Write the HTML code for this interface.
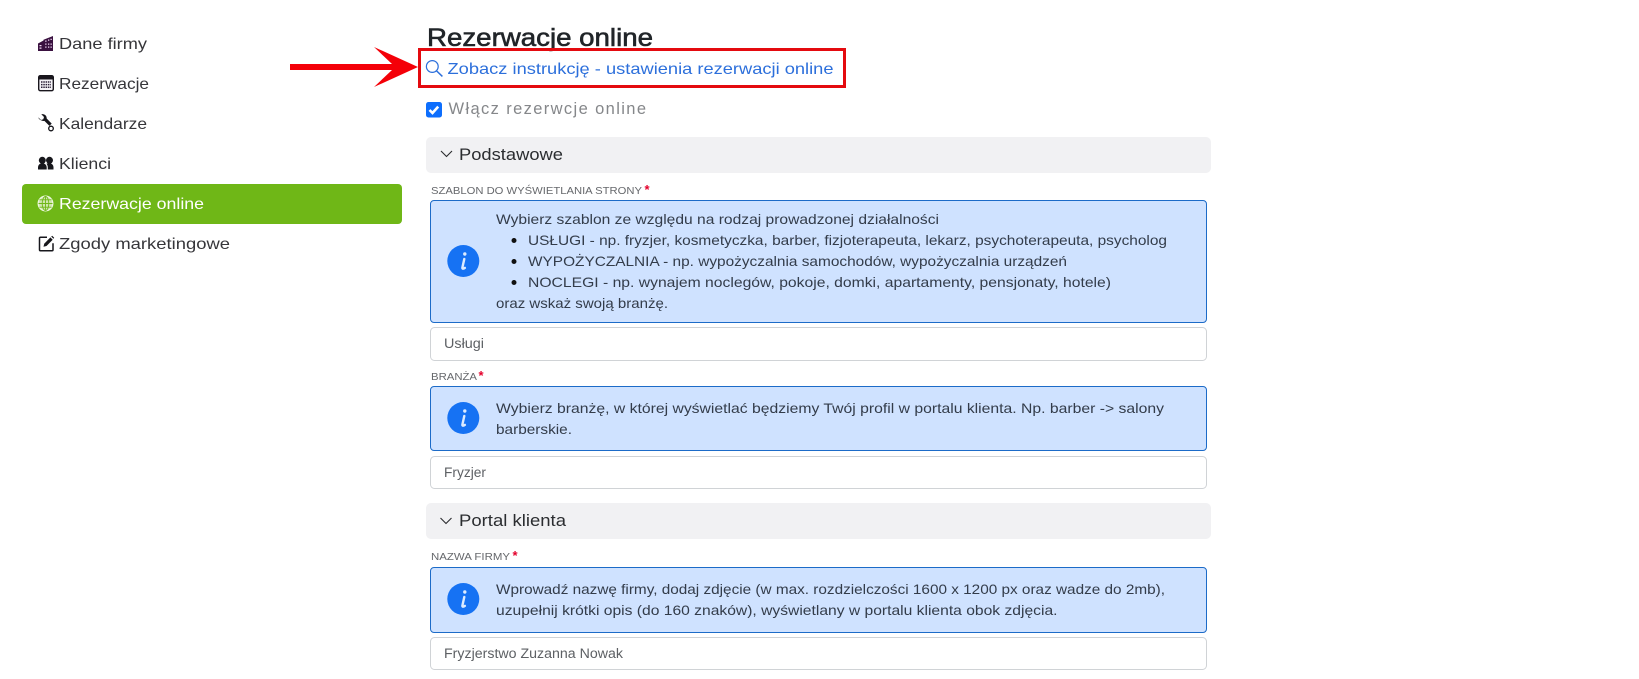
<!DOCTYPE html>
<html lang="pl">
<head>
<meta charset="utf-8">
<title>Rezerwacje online</title>
<style>
html,body{margin:0;padding:0;background:#fff;width:1639px;height:679px;overflow:hidden}
svg{display:block}
text{font-family:"Liberation Sans",sans-serif;white-space:pre}
.nav{font-size:16px;fill:#36363a}
.al{font-size:14px;fill:#333c4a}
.lb{font-size:10.5px;fill:#66686c}
.st{font-size:13px;fill:#e4002b;font-weight:bold}
.in{font-size:13.5px;fill:#5d6064}
.ac{font-size:16.5px;fill:#2b2d30}
.box{fill:#cfe2ff;stroke:#1c6bc8;stroke-width:1}
.inp{fill:#fff;stroke:#d0d3d6;stroke-width:1}
.acb{fill:#f1f1f3}
.ii{fill:none;stroke:#dcebff;stroke-width:2.4;stroke-linecap:round}
</style>
</head>
<body>
<svg width="1639" height="679" viewBox="0 0 1639 679" xmlns="http://www.w3.org/2000/svg">
<rect width="1639" height="679" fill="#fff"/>

<!-- sidebar -->
<rect x="22" y="184" width="380" height="40" rx="4" fill="#6fb717"/>
<text class="nav" x="59" y="49" textLength="88" lengthAdjust="spacingAndGlyphs">Dane firmy</text>
<text class="nav" x="59" y="89" textLength="90" lengthAdjust="spacingAndGlyphs">Rezerwacje</text>
<text class="nav" x="59" y="129" textLength="88" lengthAdjust="spacingAndGlyphs">Kalendarze</text>
<text class="nav" x="59" y="169" textLength="52" lengthAdjust="spacingAndGlyphs">Klienci</text>
<text class="nav" x="59" y="209" textLength="145" lengthAdjust="spacingAndGlyphs" style="fill:#fff">Rezerwacje online</text>
<text class="nav" x="59" y="249" textLength="171" lengthAdjust="spacingAndGlyphs">Zgody marketingowe</text>

<!-- building -->
<path d="M38 51V43.500L43.500 40.500V39.800L53 36V51Z" fill="#3a1140"/>
<path d="M45.200 40.500h1.300v1.300h-1.300zM48 39.500h1.300v1.300H48zM50.500 38.700h1.300V40h-1.300zM45.200 43.500h1.300v1.300h-1.300zM48 43.500h1.300v1.300H48zM50.500 43.500h1.300v1.300h-1.300zM45.200 46.500h1.300v1.300h-1.300zM48 46.500h1.300v1.300H48zM50.500 46.500h1.300v1.300h-1.300zM39.500 45h2v1.300h-2zM39.500 47.500h2v1.300h-2z" fill="#f0d8f4"/>
<!-- calendar -->
<rect x="38.700" y="75.700" width="14.600" height="15" rx="1.600" fill="#f5f3f7" stroke="#19161d" stroke-width="1.400"/>
<rect x="38.700" y="75.700" width="14.600" height="3.800" fill="#19161d"/>
<path d="M41 82h10M41 84.600h10M41 87.200h10" stroke="#2c2038" stroke-width="1.500" stroke-dasharray="1.500 .8"/>
<!-- wrench -->
<path d="M38.300 117.400l2.700 2.600 2.300-.7.700-2.300-2.700-2.700c2.800-.9 5.600 1.300 5.400 4.200l5 5.100-2.300 2.300-5-5c-3.300.4-6-2.100-6.100-3.500z" fill="#15151a"/>
<circle cx="51" cy="128.500" r="2.300" fill="#fff" stroke="#15151a" stroke-width="1.300"/>
<!-- people -->
<g fill="#17171c">
<circle cx="42.300" cy="160.300" r="3.500"/><circle cx="49.500" cy="160.300" r="3.500"/>
<path d="M38 169.500v-2c0-2.600 1.900-4.400 4.300-4.400s4.400 1.800 4.400 4.400v2z"/>
<path d="M47.800 169.500v-2c0-1.500-.5-3-1.300-3.800.9-.5 2-.6 3-.6 2.200 0 4 1.800 4 4.200v2.200z"/>
</g>
<!-- globe -->
<circle cx="45.500" cy="203.500" r="7.500" fill="#cfe6ad"/>
<g fill="none" stroke="#eef7e0" stroke-width="1.300">
<circle cx="45.500" cy="203.500" r="7.300"/>
</g>
<g fill="none" stroke="#6fb717" stroke-width=".9">
<ellipse cx="45.500" cy="203.500" rx="3.300" ry="7"/>
<path d="M38.500 203.500h14M39.400 199.800h12.200M39.400 207.200h12.200M45.500 196.500v14"/>
</g>
<!-- pen square -->
<path d="M47 237.200H40.500a1 1 0 0 0-1 1v11.500a1 1 0 0 0 1 1h11.500a1 1 0 0 0 1-1v-6.500" fill="none" stroke="#17171c" stroke-width="1.500"/>
<path d="M43.500 246.700l.7-3 6.200-6.300 2.300 2.300-6.200 6.300z" fill="#17171c"/>
<path d="M51.200 236.500l1-.8 2 2-.8 1z" fill="#17171c"/>

<!-- arrow -->
<path d="M290 64H392L374 47L418 67L374 87L392 70H290Z" fill="#f40008"/>

<!-- title -->
<text x="427" y="46" font-size="25" textLength="226" lengthAdjust="spacingAndGlyphs" fill="#212529" stroke="#212529" stroke-width=".6">Rezerwacje online</text>

<!-- red box + link -->
<rect x="419.500" y="49.500" width="425" height="37" fill="none" stroke="#e40a0f" stroke-width="3"/>
<circle cx="432.300" cy="66.500" r="5.900" fill="none" stroke="#2c6fdb" stroke-width="1.200"/>
<path d="M436.700 71l5.700 5.400" stroke="#2c6fdb" stroke-width="1.500" fill="none"/>
<text x="447.500" y="74" font-size="16" textLength="386" lengthAdjust="spacingAndGlyphs" fill="#2c6fdb">Zobacz instrukcję - ustawienia rezerwacji online</text>

<!-- checkbox -->
<rect x="426" y="102" width="16" height="15.500" rx="2.500" fill="#0d6efd"/>
<path d="M429.500 110l3 3 5.700-6.400" fill="none" stroke="#fff" stroke-width="2.600"/>
<text x="448.500" y="114" font-size="16.500" textLength="197.500" lengthAdjust="spacing" fill="#85878a">Włącz rezerwcje online</text>

<!-- accordion 1 -->
<rect class="acb" x="426" y="137" width="785" height="36" rx="5"/>
<path d="M441 151l5.500 5.500 5.500-5.500" fill="none" stroke="#2a2b2e" stroke-width="1.100"/>
<text class="ac" x="459" y="160" textLength="104" lengthAdjust="spacingAndGlyphs">Podstawowe</text>

<!-- szablon -->
<text class="lb" x="431" y="194" textLength="211" lengthAdjust="spacingAndGlyphs">SZABLON DO WYŚWIETLANIA STRONY</text>
<text class="st" x="644.500" y="194">*</text>
<rect class="box" x="430.500" y="200.500" width="776" height="122" rx="3.500"/>
<circle cx="463.300" cy="261" r="16" fill="#1672f3"/>
<circle cx="464.800" cy="254" r="1.700" fill="#dcebff"/>
<path class="ii" d="M464.300 259l-1.900 8.500c-.3 1.300.8 1.600 2.500.4"/>
<text class="al" x="496" y="224" textLength="443" lengthAdjust="spacingAndGlyphs">Wybierz szablon ze względu na rodzaj prowadzonej działalności</text>
<circle cx="514" cy="240.500" r="2.500" fill="#111"/>
<text class="al" x="528" y="245" textLength="639" lengthAdjust="spacingAndGlyphs">USŁUGI - np. fryzjer, kosmetyczka, barber, fizjoterapeuta, lekarz, psychoterapeuta, psycholog</text>
<circle cx="514" cy="261.500" r="2.500" fill="#111"/>
<text class="al" x="528" y="266" textLength="539" lengthAdjust="spacingAndGlyphs">WYPOŻYCZALNIA - np. wypożyczalnia samochodów, wypożyczalnia urządzeń</text>
<circle cx="514" cy="282.500" r="2.500" fill="#111"/>
<text class="al" x="528" y="287" textLength="583" lengthAdjust="spacingAndGlyphs">NOCLEGI - np. wynajem noclegów, pokoje, domki, apartamenty, pensjonaty, hotele)</text>
<text class="al" x="496" y="308" textLength="172" lengthAdjust="spacingAndGlyphs">oraz wskaż swoją branżę.</text>
<rect class="inp" x="430.500" y="327.500" width="776" height="33" rx="4"/>
<text class="in" x="444" y="348" textLength="40" lengthAdjust="spacingAndGlyphs">Usługi</text>

<!-- branza -->
<text class="lb" x="431" y="380" textLength="46" lengthAdjust="spacingAndGlyphs">BRANŻA</text>
<text class="st" x="478.500" y="380">*</text>
<rect class="box" x="430.500" y="386.500" width="776" height="64" rx="3.500"/>
<circle cx="463.300" cy="418" r="16" fill="#1672f3"/>
<circle cx="464.800" cy="411" r="1.700" fill="#dcebff"/>
<path class="ii" d="M464.300 416l-1.900 8.500c-.3 1.300.8 1.600 2.500.4"/>
<text class="al" x="496" y="413" textLength="668" lengthAdjust="spacingAndGlyphs">Wybierz branżę, w której wyświetlać będziemy Twój profil w portalu klienta. Np. barber -&gt; salony</text>
<text class="al" x="496" y="434" textLength="76" lengthAdjust="spacingAndGlyphs">barberskie.</text>
<rect class="inp" x="430.500" y="456.500" width="776" height="32" rx="4"/>
<text class="in" x="444" y="477" textLength="42" lengthAdjust="spacingAndGlyphs">Fryzjer</text>

<!-- accordion 2 -->
<rect class="acb" x="426" y="503" width="785" height="36" rx="5"/>
<path d="M440.500 518l5.500 5.500 5.500-5.500" fill="none" stroke="#2a2b2e" stroke-width="1.100"/>
<text class="ac" x="459" y="526" textLength="107" lengthAdjust="spacingAndGlyphs">Portal klienta</text>

<!-- nazwa -->
<text class="lb" x="431" y="560" textLength="79" lengthAdjust="spacingAndGlyphs">NAZWA FIRMY</text>
<text class="st" x="512.500" y="560">*</text>
<rect class="box" x="430.500" y="567.500" width="776" height="65" rx="3.500"/>
<circle cx="463.300" cy="599" r="16" fill="#1672f3"/>
<circle cx="464.800" cy="592" r="1.700" fill="#dcebff"/>
<path class="ii" d="M464.300 597l-1.900 8.500c-.3 1.300.8 1.600 2.500.4"/>
<text class="al" x="496" y="594" textLength="669" lengthAdjust="spacingAndGlyphs">Wprowadź nazwę firmy, dodaj zdjęcie (w max. rozdzielczości 1600 x 1200 px oraz wadze do 2mb),</text>
<text class="al" x="496" y="615" textLength="561.500" lengthAdjust="spacingAndGlyphs">uzupełnij krótki opis (do 160 znaków), wyświetlany w portalu klienta obok zdjęcia.</text>
<rect class="inp" x="430.500" y="637.500" width="776" height="32" rx="4"/>
<text class="in" x="444" y="658" textLength="179" lengthAdjust="spacingAndGlyphs">Fryzjerstwo Zuzanna Nowak</text>
</svg>
</body>
</html>
